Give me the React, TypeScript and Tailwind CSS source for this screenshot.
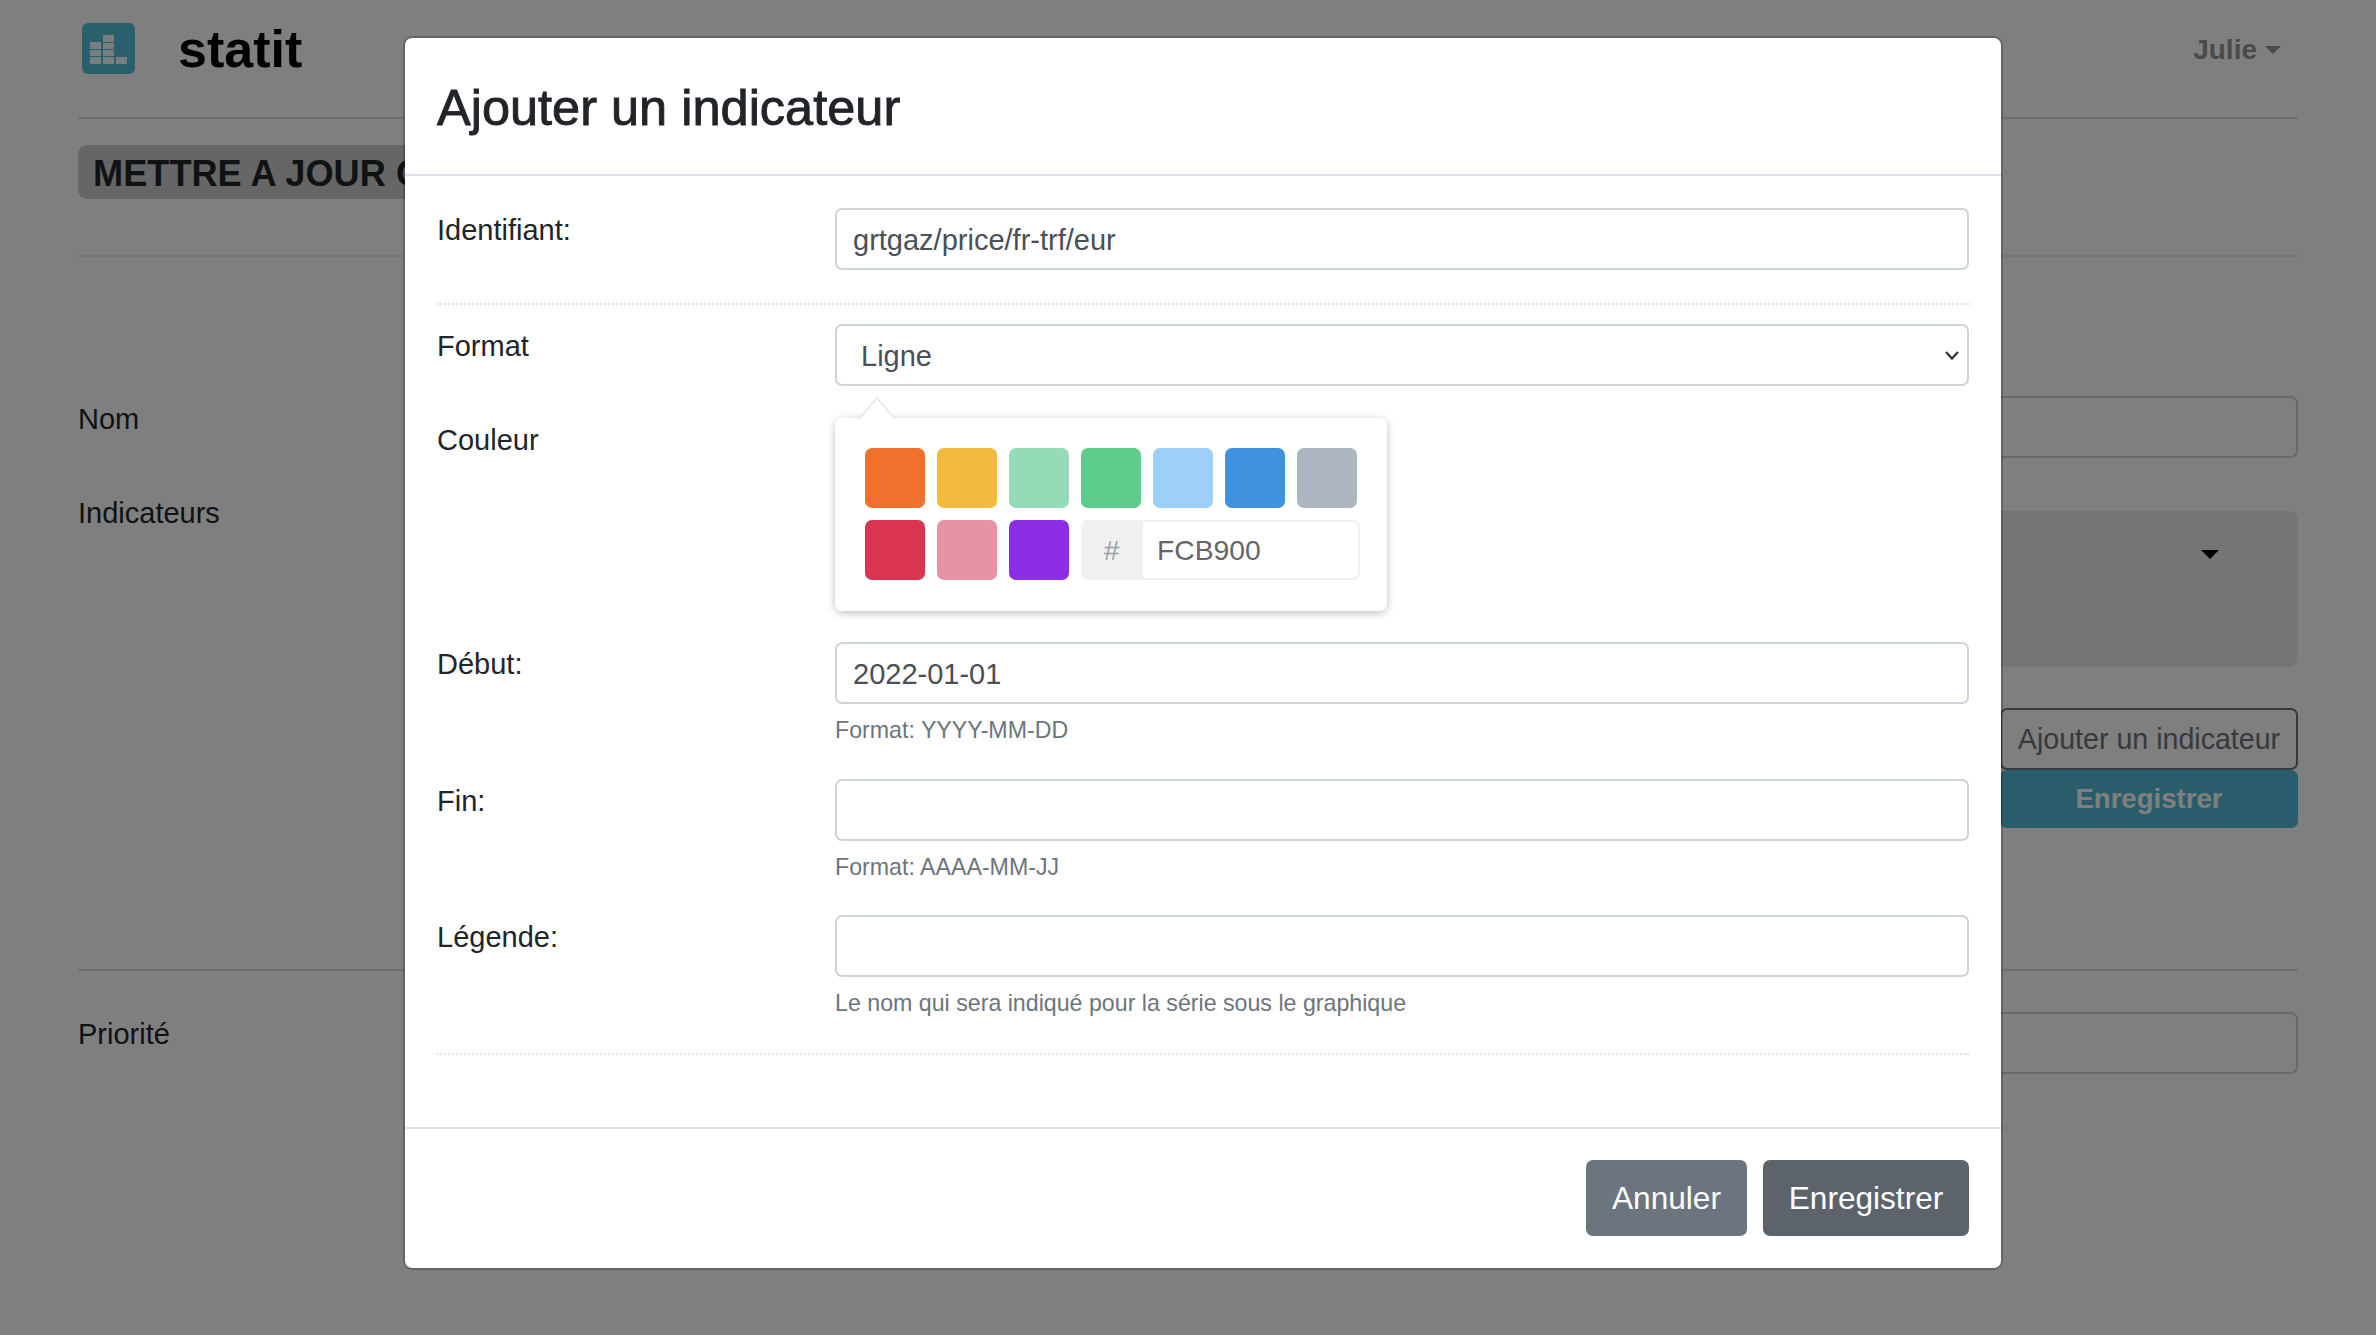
import React from "react"

const swatches = {
  one: ["#f0702d", "#f4b93f", "#96dbb8", "#5fcc8b", "#9dd0f8", "#3e93dc", "#adb6c0"],
  two: ["#d93550", "#e892a6", "#8d2ee5"]
}

function TextField({ value = "" }: { value?: string }) {
  return (
    <input
      readOnly
      value={value}
      className="w-full h-[62px] px-[16px] pt-[2px] border-2 border-[#ced4da] rounded-[7px] bg-white text-[29px] text-[#495057] outline-none"
    />
  )
}

function Hint({ children }: { children: React.ReactNode }) {
  return <div className="mt-[9px] h-[34px] leading-[34px] text-[23.2px] text-[#6c757d]">{children}</div>
}

function Row({ label, className = "", children }: { label: string; className?: string; children: React.ReactNode }) {
  return (
    <div className={`flex ${className}`}>
      <div className="w-[398px] shrink-0 leading-[44px] text-[#212529]">{label}</div>
      <div className="flex-1 min-w-0">{children}</div>
    </div>
  )
}

function ColorPopover() {
  return (
    <div className="relative w-[552px] h-[193px] pt-[30px] pl-[30px] bg-white rounded-[7px] shadow-[0_2px_8px_rgba(0,0,0,0.25)]">
      <svg className="absolute left-[23px] top-[-21px]" width="38" height="22" viewBox="0 0 38 22">
        <path d="M1 22 L19 1 L37 22" fill="#fff" stroke="#e6e6e6" strokeWidth="1.5" />
      </svg>
      <div className="flex gap-[12px]">
        {swatches.one.map((color) => (
          <div key={color} className="w-[60px] h-[60px] rounded-[7px]" style={{ background: color }} />
        ))}
      </div>
      <div className="flex gap-[12px] mt-[12px]">
        {swatches.two.map((color) => (
          <div key={color} className="w-[60px] h-[60px] rounded-[7px]" style={{ background: color }} />
        ))}
        <div className="flex w-[279px] h-[60px] border-2 border-[#f0f0f0] rounded-[7px] overflow-hidden">
          <div className="w-[60px] pr-[3px] bg-[#f0f0f0] flex items-center justify-center text-[28.3px] text-[#98a1a8]">#</div>
          <div className="flex-1 pl-[14px] pt-[1px] flex items-center text-[28.3px] text-[#666666]">FCB900</div>
        </div>
      </div>
    </div>
  )
}

function Logo() {
  return (
    <svg width="53" height="51" viewBox="0 0 53 51" className="ml-[4px]">
      <rect width="53" height="51" rx="6" fill="#54bfd8" />
      <g fill="#ffffff" fillOpacity="0.95">
        <rect x="8" y="19" width="11" height="7" />
        <rect x="8" y="27" width="11" height="6" />
        <rect x="8" y="34" width="11" height="7" />
        <rect x="21" y="12" width="11" height="7" />
        <rect x="21" y="20" width="11" height="6" />
        <rect x="21" y="27" width="11" height="6" />
        <rect x="21" y="34" width="11" height="7" />
        <rect x="34" y="34" width="11" height="7" />
      </g>
    </svg>
  )
}

function Background() {
  return (
    <div className="px-[78px] text-[29px] text-[#212529]">
      <header className="h-[117px] flex items-start">
        <div className="mt-[23px]">
          <Logo />
        </div>
        <div className="ml-[43px] mt-[13px] text-[52px] leading-[72px] font-bold text-black">statit</div>
        <div className="ml-auto mt-[29px] mr-[17px] flex items-center gap-[8px] text-[#949494] font-bold text-[28px] leading-[42px]">
          Julie
          <span className="w-0 h-0 border-x-[8px] border-x-transparent border-t-[8px] border-t-[#949494]" />
        </div>
      </header>
      <div className="h-[2px] bg-[#dcdcdc]" />
      <div className="mt-[26px] w-fit h-[54px] px-[15px] pt-[2px] leading-[54px] bg-[#cccccc] rounded-[9px] text-[36.2px] font-bold">
        METTRE A JOUR GRAPHIQUE
      </div>
      <div className="mt-[56px] border-t-2 border-dotted border-[#dcdcdc]" />
      <div className="mt-[139px] flex">
        <div className="w-[398px] pt-[1px] leading-[44px]">Nom</div>
        <TextField />
      </div>
      <div className="mt-[33px] flex">
        <div className="w-[398px] leading-[44px]">Indicateurs</div>
        <div className="flex-1 flex flex-col pt-[20px]">
          <div className="h-[156px] px-[22px] bg-[#ebebeb] rounded-[9px]">
            <div className="h-[82px] pt-[39px] pr-[57px] flex justify-end border-b-2 border-dotted border-[#e2e2e2]">
              <span className="w-0 h-0 border-x-[9px] border-x-transparent border-t-[9px] border-t-black" />
            </div>
          </div>
          <div className="mt-[41px] self-end w-[298px] h-[62px] leading-[58px] text-center border-2 border-[#6c757d] rounded-[7px] text-[#6c757d] text-[28.6px]">
            Ajouter un indicateur
          </div>
          <div className="self-end w-[298px] h-[58px] leading-[58px] text-center bg-[#54bad6] rounded-[7px] text-white font-bold text-[27.6px]">
            Enregistrer
          </div>
        </div>
      </div>
      <div className="mt-[141px] h-[2px] bg-[#dcdcdc]" />
      <div className="mt-[41px] flex">
        <div className="w-[398px] leading-[44px]">Priorité</div>
        <TextField />
      </div>
    </div>
  )
}

function Modal() {
  return (
    <div className="absolute left-[403px] top-[36px] w-[1600px] h-[1234px] flex flex-col bg-white bg-clip-padding border-2 border-black/20 rounded-[9px] text-[29px]">
      <div className="h-[138px] shrink-0 px-[32px] pt-[3px] flex items-center border-b-2 border-[#dee2e6]">
        <h5 className="text-[50.5px] leading-[60px] text-[#212529] [-webkit-text-stroke:0.9px_#212529]">
          Ajouter un indicateur
        </h5>
      </div>
      <div className="flex-1 px-[32px] pt-[32px]">
        <Row label="Identifiant:">
          <TextField value="grtgaz/price/fr-trf/eur" />
        </Row>
        <div className="mt-[33px] border-t-2 border-dotted border-[#e2e2e2]" />
        <Row label="Format" className="mt-[19px]">
          <div className="relative">
            <select
              defaultValue="Ligne"
              className="w-full h-[62px] pl-[24px] pt-[4px] appearance-none border-2 border-[#ced4da] rounded-[7px] bg-white text-[29px] text-[#495057] outline-none"
            >
              <option>Ligne</option>
            </select>
            <svg className="absolute right-[9px] top-[26px]" width="16" height="12" viewBox="0 0 16 12" fill="none">
              <path d="M2 2 L8 8.5 L14 2" stroke="#343a40" strokeWidth="2.4" />
            </svg>
          </div>
        </Row>
        <Row label="Couleur" className="mt-[32px]">
          <ColorPopover />
        </Row>
        <Row label="Début:" className="mt-[31px]">
          <TextField value="2022-01-01" />
          <Hint>Format: YYYY-MM-DD</Hint>
        </Row>
        <Row label="Fin:" className="mt-[32px]">
          <TextField />
          <Hint>Format: AAAA-MM-JJ</Hint>
        </Row>
        <Row label="Légende:" className="mt-[31px]">
          <TextField />
          <Hint>Le nom qui sera indiqué pour la série sous le graphique</Hint>
        </Row>
        <div className="mt-[33px] border-t-2 border-dotted border-[#e2e2e2]" />
      </div>
      <div className="h-[141px] shrink-0 px-[32px] flex items-start justify-end gap-[16px] pt-[31px] border-t-2 border-[#dee2e6]">
        <button className="w-[161px] h-[76px] pt-[2px] rounded-[7px] bg-[#6c757d] text-white text-[31.6px]">Annuler</button>
        <button className="w-[206px] h-[76px] pt-[2px] rounded-[7px] bg-[#5c636a] text-white text-[31.6px]">Enregistrer</button>
      </div>
    </div>
  )
}

export default function App() {
  return (
    <div className="relative h-[1335px] overflow-hidden bg-white font-['Liberation_Sans',Arial,sans-serif]">
      <Background />
      <div className="absolute inset-0 bg-black/50" />
      <Modal />
    </div>
  )
}
